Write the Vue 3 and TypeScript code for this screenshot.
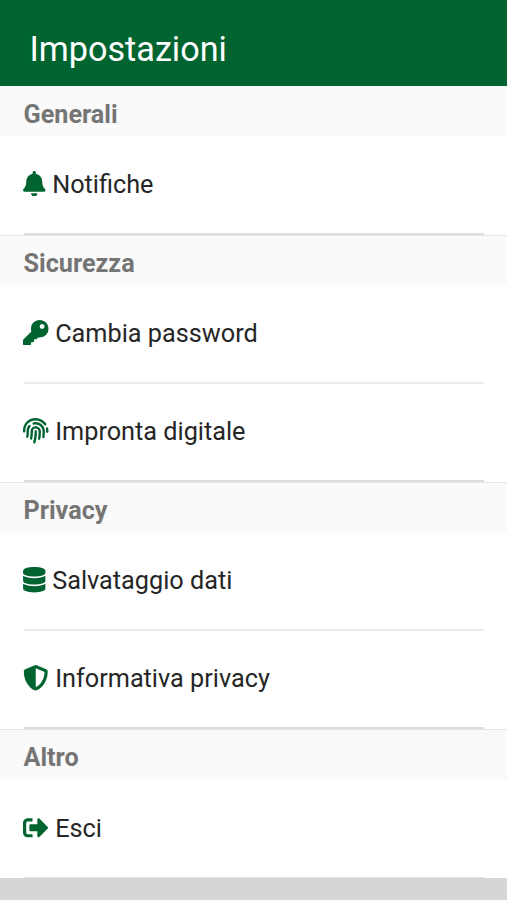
<script setup lang="ts">
interface Icon {
  width: number
  path: string
}

interface Entry {
  label: string
  icon: Icon
}

interface Section {
  title: string
  entries: Entry[]
}

const bell: Icon = {
  width: 448,
  path: 'M224 512c35.32 0 63.97-28.65 63.97-64H160.03c0 35.35 28.65 64 63.97 64zm215.39-149.71c-19.32-20.76-55.47-51.99-55.47-154.29 0-77.7-54.48-139.9-127.94-155.16V32c0-17.67-14.32-32-31.98-32s-31.98 14.33-31.98 32v20.84C118.56 68.1 64.08 130.3 64.08 208c0 102.3-36.15 133.53-55.47 154.29-6 6.45-8.66 14.16-8.61 21.71.11 16.4 12.98 32 32.1 32h383.8c19.12 0 32-15.6 32.1-32 .05-7.55-2.61-15.27-8.61-21.71z',
}
const key: Icon = {
  width: 512,
  path: 'M512 176.001C512 273.203 433.202 352 336 352c-11.22 0-22.19-1.062-32.827-3.069l-24.012 27.014A23.999 23.999 0 0 1 261.223 384H224v40c0 13.255-10.745 24-24 24h-40v40c0 13.255-10.745 24-24 24H24c-13.255 0-24-10.745-24-24v-78.059c0-6.365 2.529-12.47 7.029-16.971l161.802-161.802C163.108 213.814 160 195.271 160 176 160 78.798 238.797.001 335.999 0 433.488-.001 512 78.511 512 176.001zM336 128c0 26.51 21.49 48 48 48s48-21.49 48-48-21.49-48-48-48-48 21.49-48 48z',
}
const fingerprint: Icon = {
  width: 512,
  path: 'M256.12 245.96c-13.25 0-24 10.74-24 24 1.14 72.25-8.14 141.9-27.7 211.55-2.73 9.72 2.15 30.49 23.12 30.49 10.48 0 20.11-6.92 23.09-17.52 13.53-47.91 31.04-125.41 29.48-224.52.01-13.25-10.73-24-23.99-24zm-.86-81.73C194 164.16 151.25 211.3 152.1 265.32c.75 47.94-3.75 95.91-13.37 142.55-2.69 12.98 5.67 25.69 18.64 28.36 13.05 2.67 25.67-5.66 28.36-18.64 10.34-50.09 15.17-101.58 14.37-153.02-.41-25.95 19.92-52.49 54.45-52.34 31.31.47 57.15 25.34 57.62 55.47.77 48.05-2.81 96.33-10.61 143.55-2.17 13.06 6.69 25.42 19.76 27.58 19.97 3.33 26.81-15.1 27.58-19.77 8.28-50.03 12.06-101.21 11.27-152.11-.88-55.8-47.94-101.88-104.91-102.72zm-110.69-19.78c-10.3-8.34-25.37-6.8-33.76 3.48-25.62 31.5-39.39 71.28-38.75 112 .59 37.58-2.47 75.27-9.11 112.05-2.34 13.05 6.31 25.53 19.36 27.89 20.11 3.5 27.07-14.81 27.89-19.36 7.19-39.84 10.5-80.66 9.86-121.33-.47-29.88 9.2-57.88 28-80.97 8.35-10.28 6.79-25.39-3.49-33.76zm109.47-62.33c-15.41-.41-30.87 1.44-45.78 4.97-12.89 3.06-20.87 15.98-17.83 28.89 3.06 12.89 16 20.83 28.89 17.83 11.05-2.61 22.47-3.77 34-3.69 75.43 1.13 137.73 61.5 138.88 134.58.59 37.88-1.28 76.11-5.58 113.63-1.5 13.17 7.95 25.08 21.11 26.58 16.72 1.95 25.51-11.88 26.58-21.11a929.06 929.06 0 0 0 5.89-119.85c-1.56-98.75-85.07-180.33-186.16-181.83zm252.07 121.45c-2.86-12.92-15.51-21.2-28.61-18.27-12.94 2.86-21.12 15.66-18.26 28.61 4.71 21.41 4.91 37.41 4.7 61.6-.11 13.27 10.55 24.09 23.8 24.2h.2c13.17 0 23.89-10.61 24-23.8.18-22.18.4-44.11-5.83-72.34zm-40.12-90.72C417.29 43.46 337.6 1.29 252.81.02 183.02-.82 118.47 24.91 70.46 72.94 24.09 119.37-.9 181.04.14 246.65l-.12 21.47c-.39 13.25 10.03 24.31 23.28 24.69.23.02.48.02.72.02 12.92 0 23.59-10.3 23.97-23.3l.16-23.64c-.83-52.5 19.16-101.86 56.28-139 38.76-38.8 91.34-59.67 147.68-58.86 69.45 1.03 134.73 35.56 174.62 92.39 7.61 10.86 22.56 13.45 33.42 5.86 10.84-7.62 13.46-22.59 5.84-33.43z',
}
const database: Icon = {
  width: 448,
  path: 'M448 73.143v45.714C448 159.143 347.667 192 224 192S0 159.143 0 118.857V73.143C0 32.857 100.333 0 224 0s224 32.857 224 73.143zM448 176v102.857C448 319.143 347.667 352 224 352S0 319.143 0 278.857V176c48.125 33.143 136.208 48.572 224 48.572S399.874 209.143 448 176zm0 160v102.857C448 479.143 347.667 512 224 512S0 479.143 0 438.857V336c48.125 33.143 136.208 48.572 224 48.572S399.874 369.143 448 336z',
}
const shield: Icon = {
  width: 512,
  path: 'M466.5 83.7l-192-80a48.15 48.15 0 0 0-36.9 0l-192 80C27.7 91.1 16 108.6 16 128c0 198.5 114.5 335.7 221.5 380.3 11.8 4.9 25.1 4.9 36.9 0C360.1 472.6 496 349.3 496 128c0-19.4-11.7-36.9-29.5-44.3zM256.1 446.3l-.1-381 175.9 73.3c-3.3 151.4-82.1 261.1-175.8 307.7z',
}
const signOut: Icon = {
  width: 512,
  path: 'M497 273L329 441c-15 15-41 4.5-41-17v-96H152c-13.3 0-24-10.7-24-24v-96c0-13.3 10.7-24 24-24h136V88c0-21.4 25.9-32 41-17l168 168c9.3 9.4 9.3 24.6 0 34zM192 436v-40c0-6.6-5.4-12-12-12H96c-17.7 0-32-14.3-32-32V160c0-17.7 14.3-32 32-32h84c6.6 0 12-5.4 12-12V76c0-6.6-5.4-12-12-12H96c-53 0-96 43-96 96v192c0 53 43 96 96 96h84c6.6 0 12-5.4 12-12z',
}

const sections: Section[] = [
  { title: 'Generali', entries: [{ label: 'Notifiche', icon: bell }] },
  {
    title: 'Sicurezza',
    entries: [
      { label: 'Cambia password', icon: key },
      { label: 'Impronta digitale', icon: fingerprint },
    ],
  },
  {
    title: 'Privacy',
    entries: [
      { label: 'Salvataggio dati', icon: database },
      { label: 'Informativa privacy', icon: shield },
    ],
  },
  { title: 'Altro', entries: [{ label: 'Esci', icon: signOut }] },
]
</script>

<template>
  <div class="page">
    <header class="toolbar">
      <h1 class="title">Impostazioni</h1>
    </header>
    <main class="content">
      <section v-for="section in sections" :key="section.title" class="section">
        <h2 class="section-title">{{ section.title }}</h2>
        <ul class="list">
          <li v-for="entry in section.entries" :key="entry.label" class="entry">
            <svg
              class="icon"
              :class="{ narrow: entry.icon.width === 448 }"
              :viewBox="`0 0 ${entry.icon.width} 512`"
              aria-hidden="true"
            >
              <path :d="entry.icon.path" />
            </svg>
            <span>{{ entry.label }}</span>
          </li>
        </ul>
      </section>
    </main>
  </div>
</template>

<style>
body {
  margin: 0;
  background: #d6d6d6;
}
</style>

<style scoped>
.page {
  height: 900px;
  overflow: hidden;
  background: #d6d6d6;
  font-family: Roboto, 'Liberation Sans', sans-serif;
}

.toolbar {
  box-sizing: border-box;
  height: 86px;
  padding: 30px 29.5px 0;
  background: #006430;
}

.title {
  margin: 0;
  color: #fff;
  font-size: 34.2px;
  font-weight: 400;
  line-height: 39px;
}

.content {
  padding-top: 0.7px;
  background: #fafafa;
}

.section {
  box-sizing: border-box;
  background: #fff;
  border-bottom: 1px solid #e4e4e4;
}

.section:last-child {
  border-bottom: 0;
}

.section-title {
  box-sizing: border-box;
  height: 49.7px;
  margin: 0;
  padding: 0 23.5px;
  background: #fafafa;
  color: #757575;
  font-size: 25.2px;
  font-weight: 700;
  line-height: 55.4px;
}

.list {
  margin: 0;
  padding: 0 23.5px;
  list-style: none;
}

.entry {
  display: flex;
  align-items: center;
  gap: 6.7px;
  box-sizing: border-box;
  height: 98.3px;
  border-bottom: 2px solid #ebebeb;
  color: #262626;
  font-size: 25.25px;
  line-height: 30px;
}

.entry:last-child {
  border-bottom-color: #dedede;
}

.section:last-child .entry:last-child {
  border-bottom: 1px solid #e4e4e4;
}

.icon {
  width: 25.5px;
  height: 25.5px;
  flex: none;
  margin-top: -2px;
  margin-left: -0.5px;
  fill: #006430;
}

.narrow {
  width: 22.5px;
}
</style>
